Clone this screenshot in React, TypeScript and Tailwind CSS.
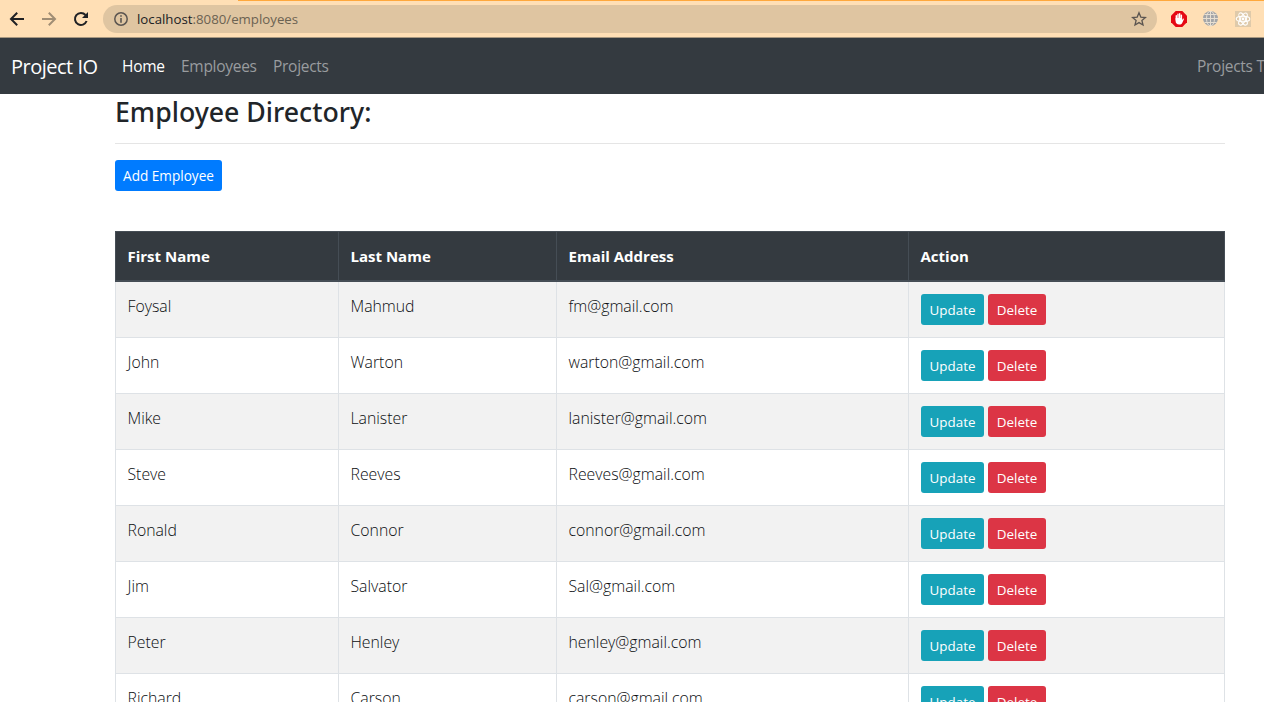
import React from "react";

const employees = [
  ["Foysal", "Mahmud", "fm@gmail.com"],
  ["John", "Warton", "warton@gmail.com"],
  ["Mike", "Lanister", "lanister@gmail.com"],
  ["Steve", "Reeves", "Reeves@gmail.com"],
  ["Ronald", "Connor", "connor@gmail.com"],
  ["Jim", "Salvator", "Sal@gmail.com"],
  ["Peter", "Henley", "henley@gmail.com"],
  ["Richard", "Carson", "carson@gmail.com"],
];

function BrowserBar() {
  return (
    <div className="flex h-[38px] flex-col border-b border-[#a89880] bg-[#ffdfb5]">
      <div className="ml-[238px] h-px shrink-0 bg-[#ffa83c]" />
      <div className="flex h-9 items-center">
        <svg className="ml-[9px]" width="16" height="16" viewBox="0 0 16 16" fill="none" stroke="#202124" strokeWidth="2">
          <path d="M15 8H2.5M8.2 1.8L2 8l6.2 6.2" />
        </svg>
        <svg className="ml-4" width="16" height="16" viewBox="0 0 16 16" fill="none" stroke="#a08d74" strokeWidth="2">
          <path d="M1 8h12.5M7.8 1.8L14 8l-6.2 6.2" />
        </svg>
        <svg className="ml-4" width="16" height="16" viewBox="0 0 16 16">
          <path d="M13.6 10A6 6 0 1 1 12.5 4" fill="none" stroke="#202124" strokeWidth="2" />
          <path d="M15 1v6H9z" fill="#202124" />
        </svg>
        <div className="ml-[14px] flex h-7 w-[1054px] items-center rounded-full bg-[#dfc5a1] pr-[10px] pl-[11px]">
          <svg width="14" height="14" viewBox="0 0 14 14">
            <circle cx="7" cy="7" r="6.2" fill="none" stroke="#5b5550" strokeWidth="1.5" />
            <path d="M6.2 3.3h1.6v1.5H6.2zM6.2 6h1.6v4.7H6.2z" fill="#5b5550" />
          </svg>
          <span className="ml-[9px] text-[13.25px] leading-5 whitespace-nowrap text-[#6b6252]">
            <span className="text-[#202124]">localhost</span>:8080/employees
          </span>
          <svg className="ml-auto" width="16" height="16" viewBox="0 0 16 16" fill="none" stroke="#5b5550" strokeWidth="1.3">
            <path d="M8 1.8l1.8 4.3 4.6.4-3.5 3 1.1 4.5L8 11.6 4 14l1.1-4.5-3.5-3 4.6-.4z" />
          </svg>
        </div>
        <svg className="ml-[14px]" width="16" height="16" viewBox="0 0 16 16">
          <path d="M4.7 0h6.6L16 4.7v6.6L11.3 16H4.7L0 11.3V4.7z" fill="#e50914" />
          <g stroke="#fff" strokeLinecap="round" strokeWidth="1.4">
            <path d="M5.300 9V4.800M7 8V3.200M8.700 8V2.700M10.400 9V4.200" />
          </g>
          <path d="M4.600 7h6.500v2l1-1.300c.5-.4 1 .1.8.6L11.200 12c-.6 1-1.500 1.500-3 1.500-2.300 0-3.600-1.300-3.600-3.500z" fill="#fff" />
        </svg>
        <svg className="ml-4" width="16" height="16" viewBox="0 0 16 16">
          <circle cx="7.500" cy="7.500" r="7.500" fill="#a3a5a8" />
          <g fill="none" stroke="#e8dfd2" strokeWidth="1">
            <path d="M7.500 0v15M0 7.500h15M1.500 3.500h12M1.500 11.500h12" />
            <ellipse cx="7.500" cy="7.500" rx="4" ry="7.500" />
          </g>
        </svg>
        <svg className="ml-4" width="16" height="16" viewBox="0 0 16 16">
          <rect width="16" height="16" fill="#dfcaaa" />
          <g fill="none" stroke="#fff" strokeWidth="1.100">
            <ellipse cx="8" cy="8" rx="6.800" ry="2.700" />
            <ellipse cx="8" cy="8" rx="6.800" ry="2.700" transform="rotate(60 8 8)" />
            <ellipse cx="8" cy="8" rx="6.800" ry="2.700" transform="rotate(120 8 8)" />
          </g>
          <circle cx="8" cy="8" r="1.400" fill="#fff" />
        </svg>
      </div>
    </div>
  );
}

function NavBar() {
  return (
    <nav className="flex h-14 items-center overflow-hidden bg-[#343a40] pt-0.5 pl-[11px] text-[15.5px] tracking-[-0.28px] whitespace-nowrap text-[#999c9f]">
      <a className="w-[111px] text-[20px] tracking-[-0.5px] text-white">Project IO</a>
      <a className="w-[59px] text-white">Home</a>
      <a className="w-[92px]">Employees</a>
      <a>Projects</a>
      <a className="ml-auto w-[67px] shrink-0">Projects Table</a>
    </nav>
  );
}

export default function App() {
  return (
    <div className="h-[702px] w-[1264px] overflow-hidden bg-white font-['Open_Sans','Noto_Sans',sans-serif] text-[#212529]">
      <BrowserBar />
      <NavBar />
      <main className="ml-[115px] w-[1110px]">
        <h3 className="h-[49px] pt-[1px] font-['Noto_Sans',sans-serif] text-[26.7px] leading-[34px] font-medium">
          Employee Directory:
        </h3>
        <hr className="border-[#e5e5e5]" />
        <button className="mt-4 block h-[31px] w-[107px] rounded-[3px] bg-[#007bff] pt-px text-[13.6px] whitespace-nowrap text-white">
          Add Employee
        </button>
        <table className="mt-10 w-[1110px] table-fixed border-separate border-spacing-0 text-left text-[15px]">
          <colgroup>
            <col className="w-[224px]" />
            <col className="w-[218px]" />
            <col className="w-[352px]" />
            <col className="w-[316px]" />
          </colgroup>
          <thead>
            <tr className="h-[51px] bg-[#343a40] text-white">
              {["First Name", "Last Name", "Email Address", "Action"].map((h) => (
                <th key={h} className="border-t border-r border-b-2 border-[#454d55] p-0 pl-[11.5px] font-bold first:border-l">
                  {h}
                </th>
              ))}
            </tr>
          </thead>
          <tbody>
            {employees.map((row) => (
              <tr key={row[2]} className="h-14 odd:bg-[#f2f2f2]">
                {row.map((value) => (
                  <td key={value} className="border-r border-b border-[#dee2e6] p-0 pt-3 pl-[11.5px] align-top text-[15.8px] leading-6 font-light text-[#0a0d10] first:border-l">
                    {value}
                  </td>
                ))}
                <td className="border-r border-b border-[#dee2e6] p-0 pt-3 pl-3 align-top">
                  <div className="flex gap-1 text-[13.4px] text-white">
                    <button className="h-[31px] w-[63px] rounded-[3px] bg-[#17a2b8] pt-px">Update</button>
                    <button className="h-[31px] w-[58px] rounded-[3px] bg-[#dc3545] pt-px">Delete</button>
                  </div>
                </td>
              </tr>
            ))}
          </tbody>
        </table>
      </main>
    </div>
  );
}
